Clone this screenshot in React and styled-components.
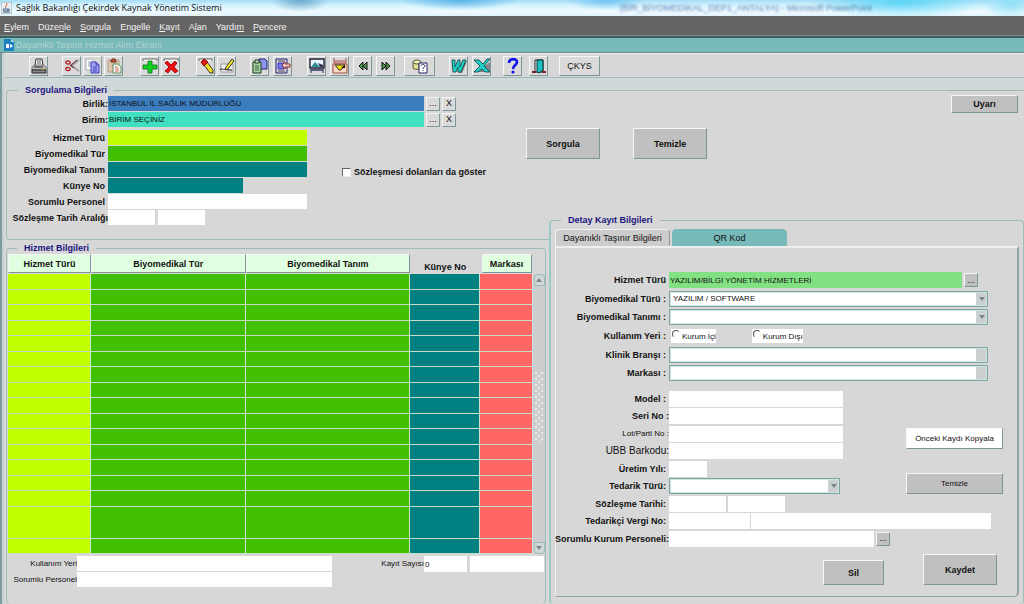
import React, { useState } from 'react';
import styled, { createGlobalStyle, css } from 'styled-components';

const GlobalStyle = createGlobalStyle`
  * {
    box-sizing: border-box;
  }
  body {
    margin: 0;
    background: #d7d7d7;
    color: #111;
    font-family: 'Liberation Sans', Arial, sans-serif;
    font-size: 9px;
    line-height: 12px;
  }
  button, input, select {
    font: inherit;
    color: inherit;
    margin: 0;
  }
`;

const bevel = css`
  border: 1px solid;
  border-color: #f6f6f6 #7f9696 #7f9696 #f6f6f6;
`;

const Screen = styled.div`
  min-height: 100vh;
  display: flex;
  flex-direction: column;
`;

/* window title */

const TitleBar = styled.header`
  display: flex;
  align-items: center;
  height: 16px;
  padding-left: 1px;
  gap: 4px;
  background:
    radial-gradient(ellipse 30px 12px at 300px 0, #6aa8cc, transparent),
    radial-gradient(ellipse 60px 10px at 460px 0, #58b4ea, transparent),
    radial-gradient(ellipse 40px 10px at 606px 0, #6ec4f2, transparent),
    radial-gradient(ellipse 90px 16px at 900px 2px, #5cd6f6, transparent),
    radial-gradient(ellipse 30px 14px at 1010px 4px, #8fe0f8, transparent),
    linear-gradient(to bottom, #a4dcf6 0, #d4f2fd 5px, #f0fbff 12px, #dff2fa 16px);
`;

const WindowTitle = styled.h1`
  margin: 0;
  font-family: 'Open Sans', 'Noto Sans', sans-serif;
  font-size: 9px;
  font-weight: 400;
  white-space: nowrap;
`;

const BehindTitle = styled.span`
  margin: 0 152px 0 auto;
  color: #33549a;
  opacity: 0.7;
  filter: blur(1px);
  white-space: nowrap;
`;

const MenuBar = styled.nav`
  display: flex;
  align-items: center;
  gap: 9px;
  height: 20px;
  padding: 2px 4px 0;
  background: #646464;
  border-bottom: 1px solid #7b8a8a;
`;

const MenuLink = styled.a`
  color: #f4f4f4;
  text-decoration: none;
`;

const Caption = styled.div`
  display: flex;
  align-items: center;
  gap: 2px;
  height: 17px;
  padding-left: 4px;
  background: #78b9b9;
  color: #b4d4d4;
  border-top: 2px solid #3c5f60;
  border-bottom: 1px solid #668b8b;
`;

const Frame = styled.main`
  flex: 1;
  display: flex;
  flex-direction: column;
  padding-left: 3px;
  border-left: 2px solid #7d9a9c;
  box-shadow: inset 2px 0 #c3d3d4;
`;

/* toolbar */

const Toolbar = styled.div`
  display: flex;
  align-items: center;
  height: 25px;
  padding: 1px 0 0 10px;
  border-top: 1px solid #f0f0f0;
  border-bottom: 1px solid #9dbaba;
`;

const ToolGroup = styled.div`
  display: flex;
  gap: ${({ gap }) => gap || 2}px;
  margin-left: ${({ lead }) => lead}px;
`;

const ToolButton = styled.button`
  ${bevel}
  display: flex;
  align-items: center;
  justify-content: center;
  width: ${({ wide }) => wide || 19}px;
  height: 20px;
  padding: 0;
  background: #dadada;
`;

const Strip = styled.div`
  height: 12px;
  background: #d0d9d9;
`;

/* shared form parts */

const Group = styled.fieldset`
  margin: 0;
  min-width: 0;
  padding: 0;
  border: 1px solid #9cbcba;
  border-bottom-width: ${({ open }) => (open ? 0 : 1)}px;
  border-radius: 4px;
`;

const Legend = styled.legend`
  margin-left: ${({ inset }) => inset || 10}px;
  padding: 0 7px;
  color: #1c1480;
  font-weight: 700;
`;

const Row = styled.div`
  display: flex;
  align-items: center;
  min-width: 0;
`;

const Label = styled.label`
  display: flex;
  justify-content: flex-end;
  flex: none;
  width: ${({ w }) => w}px;
  padding-right: ${({ flush }) => (flush ? 0 : 3)}px;
  font-size: ${({ size }) => size || 9}px;
  font-weight: ${({ plain }) => (plain ? 400 : 700)};
  white-space: nowrap;
`;

const Field = styled.input`
  flex: 0 1 ${({ w }) => w}px;
  width: ${({ w }) => w}px;
  min-width: 0;
  height: ${({ tall }) => (tall ? 16 : 15)}px;
  margin-left: ${({ lead }) => lead || 0}px;
  padding: 0 1px;
  border: 0;
  background: ${({ tone }) => tone || '#fff'};
  font-size: 8px;
`;

const MiniButton = styled.button`
  ${bevel}
  flex: none;
  width: 14px;
  height: 14px;
  margin-left: 2px;
  padding: 0;
  background: ${({ dark }) => (dark ? '#c0c0c0' : '#dadada')};
  font-size: 9px;
  line-height: 11px;
`;

const PushButton = styled.button`
  ${bevel}
  width: ${({ w }) => w}px;
  height: ${({ h }) => h}px;
  padding: 0;
  background: ${({ light }) => (light ? '#fff' : '#c0c0c0')};
  font-size: ${({ plain }) => (plain ? 8 : 9)}px;
  font-weight: ${({ plain }) => (plain ? 400 : 700)};
  white-space: nowrap;
`;

/* query */

const Query = styled(Group)`
  display: block;
  margin: -6px 0 0 1px;
  padding-bottom: 14px;
  border-right: 0;
  border-radius: 4px 0 0 4px;
`;

const QueryBody = styled.div`
  display: flex;
  align-items: flex-start;
`;

const Stack = styled.div`
  display: grid;
  gap: 1px;
`;

const Split = styled.div`
  display: flex;
  align-items: flex-start;
  margin-top: 3px;
`;

const Check = styled.label`
  display: flex;
  align-items: center;
  gap: 3px;
  margin: 36px 0 0 35px;
  font-weight: 700;
  white-space: nowrap;
`;

const Tick = styled.input`
  appearance: none;
  width: 9px;
  height: 9px;
  background: #fff;
  border: 1px solid;
  border-color: #666 #eee #eee #666;
`;

const QueryActions = styled.div`
  display: flex;
  gap: 33px;
  margin: 32px 0 0 40px;
`;

const Warning = styled.div`
  margin: -1px 6px 0 auto;
`;

/* lower half */

const Panels = styled.div`
  flex: 1;
  display: grid;
  grid-template-columns: minmax(0, 540fr) minmax(0, 475fr);
  gap: 3px;
  margin: 2px 0 0 1px;
`;

const ListWrap = styled.div`
  display: flex;
  padding-left: 1px;
`;

const Grid = styled.table`
  flex: 1;
  width: 100%;
  table-layout: fixed;
  border-collapse: separate;
  border-spacing: 0;
  th {
    height: 20px;
    padding: 0;
    vertical-align: top;
  }
`;

const HeadButton = styled.button`
  ${bevel}
  display: block;
  width: ${({ short }) => (short ? '50px' : '100%')};
  height: 19px;
  margin: 0 auto;
  padding: 0;
  background: #e0ffe0;
  font-weight: 700;
`;

const HeadText = styled.span`
  display: block;
  padding-top: 7px;
`;

const Line = styled.tr`
  height: ${({ h }) => h}px;
`;

const Cell = styled.td`
  padding: 0;
  background: ${({ tone }) => tone};
  border-right: 1px solid #d3e2d3;
  border-bottom: 1px solid #c6dcc6;
`;

const ScrollBar = styled.div`
  display: flex;
  flex-direction: column;
  align-items: center;
  width: 12px;
  margin-top: 20px;
  background: #cdcdcf;
`;

const ScrollButton = styled.button`
  flex: none;
  display: flex;
  align-items: center;
  justify-content: center;
  width: 11px;
  height: 12px;
  padding: 0;
  background: #d0d7d7;
  border: 1px solid #9cbcba;
  border-radius: ${({ down }) => (down ? '0 0 4px 4px' : '4px 4px 0 0')};
`;

const Grip = styled.div`
  width: 8px;
  height: 70px;
  margin: 86px 0 auto;
  background-image:
    radial-gradient(circle at 1px 1px, #eaeaea 1px, transparent 1px),
    radial-gradient(circle at 4px 4px, #eaeaea 1px, transparent 1px);
  background-size: 6px 6px;
`;

const Totals = styled.div`
  display: flex;
  align-items: flex-start;
  justify-content: space-between;
  padding: 2px 1px 0 0;
`;

const Detail = styled(Group)`
  margin-top: -28px;
  padding: 3px 4px 7px;
  background: #d7d7d7;
  border-left: 2px solid #9ccac4;
`;

const Tabs = styled.div`
  display: flex;
  gap: 2px;
`;

const Tab = styled.button`
  width: 115px;
  height: 17px;
  padding: 0;
  border: 1px solid;
  border-color: #f2f2f2 #8a9a9a transparent #f2f2f2;
  border-radius: 4px 4px 0 0;
  background: #cccccc;
  white-space: nowrap;
  ${({ idle }) =>
    idle &&
    css`
      background: #78b9b9;
      border-color: #78b9b9;
    `}
`;

const TabPanel = styled.div`
  padding-top: 22px;
  padding-bottom: 11px;
  border: 1px solid;
  border-width: 2px 2px 1px 1px;
  border-color: #efefef #8fa3a3 #8fa3a3 #efefef;
  border-radius: 0 0 5px 0;
`;

const TopForm = styled.div`
  display: grid;
  grid-template-rows: 20px 18px 18px 20px 18px 17px;
  margin-bottom: 9px;
`;

const Form = styled.div`
  display: grid;
  flex: 1;
  grid-auto-rows: 17px 18px;
`;

const SplitForm = styled.div`
  display: flex;
`;

const Combo = styled.span`
  display: flex;
  flex: 0 1 ${({ w }) => w}px;
  min-width: 0;
  height: 16px;
  background: #fff;
  border: 1px solid #7fa5a3;
  outline: 1px solid #cfe3e1;
  outline-offset: -2px;
`;

const Select = styled.select`
  appearance: none;
  flex: 1;
  min-width: 0;
  padding: 0 3px;
  border: 0;
  background: transparent;
  font-size: 8px;
  line-height: 14px;
`;

const Arrow = styled.span`
  display: flex;
  align-items: center;
  justify-content: center;
  width: 11px;
  background: #cbd0d0;
`;

const Radio = styled.label`
  display: flex;
  height: 14px;
  margin: 0 34px 0 2px;
  background: #fff;
  font-size: 8px;
  line-height: 16px;
  white-space: nowrap;
  input {
    appearance: none;
    width: 8px;
    height: 8px;
    margin: 1px 2px 0 1px;
    border: 1px solid;
    border-color: #555 transparent transparent #555;
    border-radius: 50%;
  }
`;

const SideActions = styled.div`
  display: flex;
  flex-direction: column;
  gap: 24px;
  margin: 38px 14px 0 0;
`;

const Footer = styled.div`
  display: flex;
  justify-content: flex-end;
  align-items: flex-end;
  gap: 39px;
  padding: 7px 20px 0 0;
`;

/* toolbar drawings, all on a 16px square */

const icons = {
  print: (
    <>
      <path d="M5 1h6l1 7H4z" fill="#fff" stroke="#333" />
      <path d="M6 3h4M6 5h4" stroke="#555" />
      <path d="M1 9l2-2h10l2 2v3H1z" fill="#bbb" stroke="#777" />
      <path d="M1 12h14v3H1z" fill="#8a8a8a" stroke="#222" />
      <path d="M3 9h9" stroke="#222" />
      <path d="M11 11h2" stroke="#c9c900" />
    </>
  ),
  cut: (
    <>
      <path d="M15 2L7 8M15 13L7 7" stroke="#a4a4a4" strokeWidth="2" />
      <path d="M13 2L6 8M10 10L6 7" stroke="#5a1010" />
      <ellipse cx="4" cy="4.5" rx="2.2" ry="1.6" stroke="#b01010" strokeWidth="1.2" />
      <ellipse cx="4" cy="11" rx="2.2" ry="1.6" stroke="#b01010" strokeWidth="1.2" />
    </>
  ),
  copy: (
    <>
      <path d="M1 1h6l3 3v8H1z" fill="#fff" stroke="#aab" />
      <path d="M3 4h4M3 6h3M3 8h3" stroke="#99a" />
      <path d="M6 4h5l3 3v8H6z" fill="#a4a6f4" stroke="#3c3cb8" />
      <path d="M11 4v3h3M8 9h4M8 11h4M8 13h4" stroke="#3c3cb8" />
    </>
  ),
  paste: (
    <>
      <path d="M2 2h11v12H2z" fill="#dcc4ae" stroke="#b09c88" />
      <path d="M5 3l1-2h3l1 2v1H5z" fill="#c05030" stroke="#703020" />
      <path d="M7 6h5l3 3v6H7z" fill="#f0f4f0" stroke="#5f8f5f" />
      <path d="M9 9h3M9 11h4M9 13h4" stroke="#d07060" />
    </>
  ),
  add: (
    <>
      <path d="M1 3V1h14v2" fill="#fff" stroke="#666" />
      <path d="M6 3h4v4h5v4h-5v4H6v-4H1V7h5z" fill="#10d020" stroke="#0a7014" strokeWidth=".8" />
    </>
  ),
  remove: (
    <>
      <path d="M1 3V1h14v2" fill="#fff" stroke="#666" />
      <path
        d="M2 5l2-2 4 4 4-4 2 2-3 4 4 4-3 2-4-4-3 4-3-2 4-4z"
        fill="#ee1010"
        stroke="#900"
        strokeWidth=".8"
      />
    </>
  ),
  clear: (
    <>
      <path d="M1 3V1h13v2" fill="#fff" stroke="#666" />
      <path d="M6 7l3-3 6 8v3h-3z" fill="#f0e020" stroke="#333" />
      <path d="M3 4l3-3 4 3-4 4z" fill="#e02020" stroke="#800" />
    </>
  ),
  edit: (
    <>
      <path d="M2 6h12v8H2z" fill="#f4f4f4" stroke="#999" />
      <path d="M13 1l2 2-6 8-3 1 1-3z" fill="#f4e820" stroke="#333" />
      <path d="M1 12c2-3 3 1 5-1M8 12h5" stroke="#111" />
    </>
  ),
  pages: (
    <>
      <path d="M7 1h6l2 2v8H7z" fill="#9094ec" stroke="#222270" />
      <path d="M1 4h8v11H1z" fill="#a9d0a9" stroke="#174017" />
      <path d="M3 2h4v3H3z" fill="#ddd" stroke="#174017" />
      <path d="M3 8h4M3 10h4M3 12h4" stroke="#3a703a" />
    </>
  ),
  insert: (
    <>
      <path d="M1 1h11v14H1z" fill="#d8d8e4" stroke="#222270" />
      <path d="M3 3h7M3 13h7" stroke="#444" />
      <path d="M3 5h6v6H3z" fill="#7478e8" stroke="#3838b0" />
      <path d="M7 7l3-3v2h5v3h-5v2z" fill="#f0d4d4" stroke="#902828" />
    </>
  ),
  screen: (
    <>
      <path d="M1 1h14v9H1z" fill="#e8f4ff" stroke="#223" strokeWidth="1.4" />
      <path d="M2 9l4-5 5 5z" fill="#2f8f98" />
      <path d="M9 5l5 2v2h-3z" fill="#335" />
      <path d="M2 15v-3h12v3M1 12h14" stroke="#336" />
    </>
  ),
  envelope: (
    <>
      <path d="M2 0v5h12V0M2 3h12" stroke="#b05050" />
      <path d="M1 6h14v9H1z" fill="#f4d8c0" stroke="#a05040" />
      <path d="M3 7h10l-4 5H7z" fill="#f0e000" stroke="#333" />
      <path d="M9 10l4-3v3z" fill="#111" />
    </>
  ),
  prev: <path d="M8 4L4 8l4 4zM12 4L8 8l4 4z" fill="#4a9a4a" stroke="#111" />,
  next: <path d="M4 4l4 4-4 4zM8 4l4 4-4 4z" fill="#4a9a4a" stroke="#111" />,
  lookup: (
    <>
      <path d="M1 4v6c1 1 3 2 6 1V4z" fill="#e4e490" stroke="#554" />
      <ellipse cx="5" cy="4" rx="4" ry="2" fill="#f4f4b0" stroke="#554" />
      <path d="M7 5h8v10H7z" fill="#fff" stroke="#226" />
      <path d="M9 8c0-2 4-2 4 0 0 1-2 1-2 3M11 12v1" stroke="#226" />
    </>
  ),
  word: (
    <>
      <path d="M13 5l3-2-5 12H8z" fill="#777" />
      <path
        d="M1 2h3v7l3-7h2v7l3-7h3l-5 12H7V9l-2 5H2z"
        fill="#20d0c8"
        stroke="#063c3c"
        strokeWidth=".8"
      />
    </>
  ),
  excel: (
    <>
      <path d="M2 14h14V4l-7 5z" fill="#858585" />
      <path
        d="M0 2h5l4 4 4-5h3l-6 7 6 6h-5l-3-3-4 3H0l6-6z"
        fill="#20d0c8"
        stroke="#063c3c"
        strokeWidth=".8"
      />
    </>
  ),
  help: (
    <>
      <path d="M4 5c0-5 8-5 8-1 0 3-4 3-4 7" stroke="#1010f0" strokeWidth="2.6" />
      <circle cx="8" cy="14" r="1.6" fill="#1010f0" />
    </>
  ),
  exit: (
    <>
      <path d="M4 2h8v12H4z" fill="#fff" stroke="#222" />
      <path d="M6 2h6v10l-4 3-2-1z" fill="#1cc0c0" stroke="#033" />
      <path d="M1 14h4M11 14h4" stroke="#722" strokeWidth="2" />
    </>
  ),
};

const Icon = ({ name }) => (
  <svg width="16" height="16" viewBox="0 0 16 16" fill="none" aria-hidden="true">
    {icons[name]}
  </svg>
);

const Triangle = ({ up }) => (
  <svg width="6" height="4" viewBox="0 0 6 4" aria-hidden="true">
    <path d={up ? 'M0 4L3 0l3 4z' : 'M0 0h6L3 4z'} fill="#76898a" />
  </svg>
);

const toolGroups = [
  { lead: 14, tools: [['print', 'Yazdır']] },
  { lead: 14, tools: [['cut', 'Kes'], ['copy', 'Kopyala'], ['paste', 'Yapıştır']] },
  { lead: 17, tools: [['add', 'Ekle'], ['remove', 'Sil']] },
  { lead: 16, tools: [['clear', 'Temizle'], ['edit', 'Düzenle']] },
  { lead: 14, gap: 4, tools: [['pages', 'Çoğalt'], ['insert', 'Aktar']] },
  {
    lead: 15,
    gap: 4,
    tools: [['screen', 'Ekran'], ['envelope', 'Gönder'], ['prev', 'Önceki'], ['next', 'Sonraki']],
  },
  { lead: 9, wide: 31, tools: [['lookup', 'Liste']] },
  { lead: 14, gap: 4, tools: [['word', 'Word'], ['excel', 'Excel']] },
  { lead: 12, gap: 7, tools: [['help', 'Yardım'], ['exit', 'Çıkış']] },
];

// [before, mnemonic, after]
const menu = [
  ['', 'E', 'ylem'],
  ['Düze', 'n', 'le'],
  ['', 'S', 'orgula'],
  ['Engelle', '', ''],
  ['', 'K', 'ayıt'],
  ['A', 'l', 'an'],
  ['Yardı', 'm', ''],
  ['', 'P', 'encere'],
];

const LIME = '#c0ff00';
const GREEN = '#40c000';
const TEAL = '#008080';
const CORAL = '#ff6666';

const columns = [
  { title: 'Hizmet Türü', tone: LIME, width: 83 },
  { title: 'Biyomedikal Tür', tone: GREEN, width: 155 },
  { title: 'Biyomedikal Tanım', tone: GREEN, width: 165 },
  { title: 'Künye No', tone: TEAL, width: 70, text: true },
  { title: 'Markası', tone: CORAL, width: 53, short: true },
];

const total = columns.reduce((sum, c) => sum + c.width, 0);

const rowHeights = [16, 15, 16, 15, 16, 15, 16, 15, 16, 15, 16, 15, 16, 15, 16, 32, 15];

function ComboBox({ id, w, value = '', locked }) {
  return (
    <Combo w={w}>
      <Select id={id} defaultValue={value}>
        <option value={value}>{value}</option>
      </Select>
      <Arrow>{!locked && <Triangle />}</Arrow>
    </Combo>
  );
}

function QuerySection() {
  const [expired, setExpired] = useState(false);

  return (
    <Query>
      <Legend inset={11}>Sorgulama Bilgileri</Legend>
      <QueryBody>
        <div>
          <Stack>
            <Row>
              <Label w={101} flush htmlFor="birlik">Birlik:</Label>
              <Field id="birlik" w={316} tone="#3c7dbe" defaultValue="İSTANBUL İL SAĞLIK MÜDÜRLÜĞÜ" />
              <MiniButton>...</MiniButton>
              <MiniButton>X</MiniButton>
            </Row>
            <Row>
              <Label w={101} flush htmlFor="birim">Birim:</Label>
              <Field id="birim" w={316} tone="#40e0c0" defaultValue="BİRİM SEÇİNİZ" />
              <MiniButton>...</MiniButton>
              <MiniButton>X</MiniButton>
            </Row>
          </Stack>
          <Split>
            <Stack>
              <Row>
                <Label w={101} htmlFor="q-hizmet">Hizmet Türü</Label>
                <Field id="q-hizmet" w={199} tone={LIME} />
              </Row>
              <Row>
                <Label w={101} htmlFor="q-tur">Biyomedikal Tür</Label>
                <Field id="q-tur" w={199} tone={GREEN} />
              </Row>
              <Row>
                <Label w={101} htmlFor="q-tanim">Biyomedikal Tanım</Label>
                <Field id="q-tanim" w={199} tone={TEAL} />
              </Row>
              <Row>
                <Label w={101} htmlFor="q-kunye">Künye No</Label>
                <Field id="q-kunye" w={135} tone={TEAL} />
              </Row>
              <Row>
                <Label w={101} htmlFor="q-personel">Sorumlu Personel</Label>
                <Field id="q-personel" w={199} />
              </Row>
              <Row>
                <Label w={101} flush htmlFor="q-tarih">Sözleşme Tarih Aralığı</Label>
                <Field id="q-tarih" w={47} />
                <Field w={47} lead={3} aria-label="Sözleşme bitiş tarihi" />
              </Row>
            </Stack>
            <Check>
              <Tick type="checkbox" checked={expired} onChange={() => setExpired(!expired)} />
              Sözleşmesi dolanları da göster
            </Check>
          </Split>
        </div>
        <QueryActions>
          <PushButton w={74} h={31}>Sorgula</PushButton>
          <PushButton w={74} h={31}>Temizle</PushButton>
        </QueryActions>
        <Warning>
          <PushButton w={67} h={18}>Uyarı</PushButton>
        </Warning>
      </QueryBody>
    </Query>
  );
}

function ServiceList() {
  return (
    <Group open>
      <Legend>Hizmet Bilgileri</Legend>
      <ListWrap>
        <Grid>
          <colgroup>
            {columns.map((c) => (
              <col key={c.title} style={{ width: `${(c.width / total) * 100}%` }} />
            ))}
          </colgroup>
          <thead>
            <tr>
              {columns.map((c) => (
                <th key={c.title}>
                  {c.text ? (
                    <HeadText>{c.title}</HeadText>
                  ) : (
                    <HeadButton short={c.short}>{c.title}</HeadButton>
                  )}
                </th>
              ))}
            </tr>
          </thead>
          <tbody>
            {rowHeights.map((h, i) => (
              <Line key={i} h={h}>
                {columns.map((c) => (
                  <Cell key={c.title} tone={c.tone} />
                ))}
              </Line>
            ))}
          </tbody>
        </Grid>
        <ScrollBar>
          <ScrollButton aria-label="Yukarı"><Triangle up /></ScrollButton>
          <Grip />
          <ScrollButton down aria-label="Aşağı"><Triangle /></ScrollButton>
        </ScrollBar>
      </ListWrap>
      <Totals>
        <Stack>
          <Row>
            <Label w={70} size={8} plain flush htmlFor="l-yer">Kullanım Yeri</Label>
            <Field id="l-yer" w={255} />
          </Row>
          <Row>
            <Label w={70} size={8} plain flush htmlFor="l-personel">Sorumlu Personel</Label>
            <Field id="l-personel" w={255} />
          </Row>
        </Stack>
        <Row>
          <Label w={46} size={8} plain flush htmlFor="l-sayi">Kayıt Sayısı</Label>
          <Field id="l-sayi" w={43} tall defaultValue="0" />
          <Field w={74} tall lead={3} aria-label="Toplam" />
        </Row>
      </Totals>
    </Group>
  );
}

function DetailSection() {
  const [place, setPlace] = useState('');

  return (
    <Detail open>
      <Legend inset={6}>Detay Kayıt Bilgileri</Legend>
      <Tabs>
        <Tab>Dayanıklı Taşınır Bilgileri</Tab>
        <Tab idle>QR Kod</Tab>
      </Tabs>
      <TabPanel>
        <TopForm>
          <Row>
            <Label w={113} htmlFor="d-hizmet">Hizmet Türü</Label>
            <Field id="d-hizmet" w={293} tall tone="#82e182" defaultValue="YAZILIM/BİLGİ YÖNETİM HİZMETLERİ" />
            <MiniButton dark>...</MiniButton>
          </Row>
          <Row>
            <Label w={113} htmlFor="d-tur">Biyomedikal Türü :</Label>
            <ComboBox id="d-tur" w={319} value="YAZILIM / SOFTWARE" />
          </Row>
          <Row>
            <Label w={113} htmlFor="d-tanim">Biyomedikal Tanımı :</Label>
            <ComboBox id="d-tanim" w={319} />
          </Row>
          <Row>
            <Label w={113} as="span">Kullanım Yeri :</Label>
            {['Kurum İçi', 'Kurum Dışı'].map((name) => (
              <Radio key={name}>
                <input type="radio" name="yer" checked={place === name} onChange={() => setPlace(name)} />
                {name}
              </Radio>
            ))}
          </Row>
          <Row>
            <Label w={113} htmlFor="d-klinik">Klinik Branşı :</Label>
            <ComboBox id="d-klinik" w={319} locked />
          </Row>
          <Row>
            <Label w={113} htmlFor="d-marka">Markası :</Label>
            <ComboBox id="d-marka" w={319} locked />
          </Row>
        </TopForm>
        <SplitForm>
          <Form>
            <Row>
              <Label w={113} htmlFor="d-model">Model :</Label>
              <Field id="d-model" w={174} tall />
            </Row>
            <Row>
              <Label w={113} flush htmlFor="d-seri">Seri No :</Label>
              <Field id="d-seri" w={174} tall />
            </Row>
            <Row>
              <Label w={113} size={8} plain flush htmlFor="d-lot">Lot/Parti No :</Label>
              <Field id="d-lot" w={174} tall />
            </Row>
            <Row>
              <Label w={113} size={10} plain flush htmlFor="d-ubb">UBB Barkodu:</Label>
              <Field id="d-ubb" w={174} tall />
            </Row>
            <Row>
              <Label w={113} htmlFor="d-yil">Üretim Yılı:</Label>
              <Field id="d-yil" w={38} tall />
            </Row>
            <Row>
              <Label w={113} htmlFor="d-tedarik">Tedarik Türü:</Label>
              <ComboBox id="d-tedarik" w={171} />
            </Row>
          </Form>
          <SideActions>
            <PushButton w={97} h={21} plain light>Önceki Kaydı Kopyala</PushButton>
            <PushButton w={97} h={21} plain>Temizle</PushButton>
          </SideActions>
        </SplitForm>
        <Form>
          <Row>
            <Label w={113} htmlFor="d-tarih">Sözleşme Tarihi:</Label>
            <Field id="d-tarih" w={57} tall />
            <Field w={57} tall lead={2} aria-label="Sözleşme bitişi" />
          </Row>
          <Row>
            <Label w={113} htmlFor="d-vergi">Tedarikçi Vergi No:</Label>
            <Field id="d-vergi" w={81} tall />
            <Field w={240} tall lead={1} aria-label="Tedarikçi adı" />
          </Row>
          <Row>
            <Label w={113} flush htmlFor="d-personel">Sorumlu Kurum Personeli:</Label>
            <Field id="d-personel" w={205} tall />
            <MiniButton dark>...</MiniButton>
          </Row>
        </Form>
        <Footer>
          <PushButton w={61} h={25}>Sil</PushButton>
          <PushButton w={74} h={31}>Kaydet</PushButton>
        </Footer>
      </TabPanel>
    </Detail>
  );
}

function App() {
  return (
    <Screen>
      <GlobalStyle />
      <TitleBar>
        <svg width="11" height="12" viewBox="0 0 11 12" fill="none" aria-hidden="true">
          <path d="M0 0h11v12H0z" fill="#e8eef2" stroke="#9aa" />
          <path d="M5 1c3 2-2 3 0 5" stroke="#d84a20" />
          <path d="M2 7h5v2H3zM7 7c3 0 1 2 0 2M2 10h7" stroke="#466a90" />
        </svg>
        <WindowTitle>Sağlık Bakanlığı Çekirdek Kaynak Yönetim Sistemi</WindowTitle>
        <BehindTitle>(BİR_BİYOMEDİKAL_DEP1_ANTALYA) - Microsoft PowerPoint</BehindTitle>
      </TitleBar>
      <MenuBar>
        {menu.map(([before, key, after]) => (
          <MenuLink href="#" key={before + key + after}>
            {before}
            {key && <u>{key}</u>}
            {after}
          </MenuLink>
        ))}
      </MenuBar>
      <Caption>
        <svg width="10" height="12" viewBox="0 0 10 12" aria-hidden="true">
          <path d="M0 0h7l3 3v9H0z" fill="#1c7fc0" />
          <path d="M7 0l3 3H7z" fill="#bfe0f0" />
          <path d="M2 5h3v4H2zM6 5l3 2-3 2z" fill="#fff" />
        </svg>
        Dayanıklı Taşınır Hizmet Alım Ekranı
      </Caption>
      <Frame>
        <Toolbar>
          {toolGroups.map((group) => (
            <ToolGroup key={group.tools[0][0]} lead={group.lead} gap={group.gap}>
              {group.tools.map(([name, label]) => (
                <ToolButton key={name} wide={group.wide} aria-label={label}>
                  <Icon name={name} />
                </ToolButton>
              ))}
            </ToolGroup>
          ))}
          <ToolGroup lead={11}>
            <ToolButton wide={41}>ÇKYS</ToolButton>
          </ToolGroup>
        </Toolbar>
        <Strip />
        <QuerySection />
        <Panels>
          <ServiceList />
          <DetailSection />
        </Panels>
      </Frame>
    </Screen>
  );
}

export default App;
